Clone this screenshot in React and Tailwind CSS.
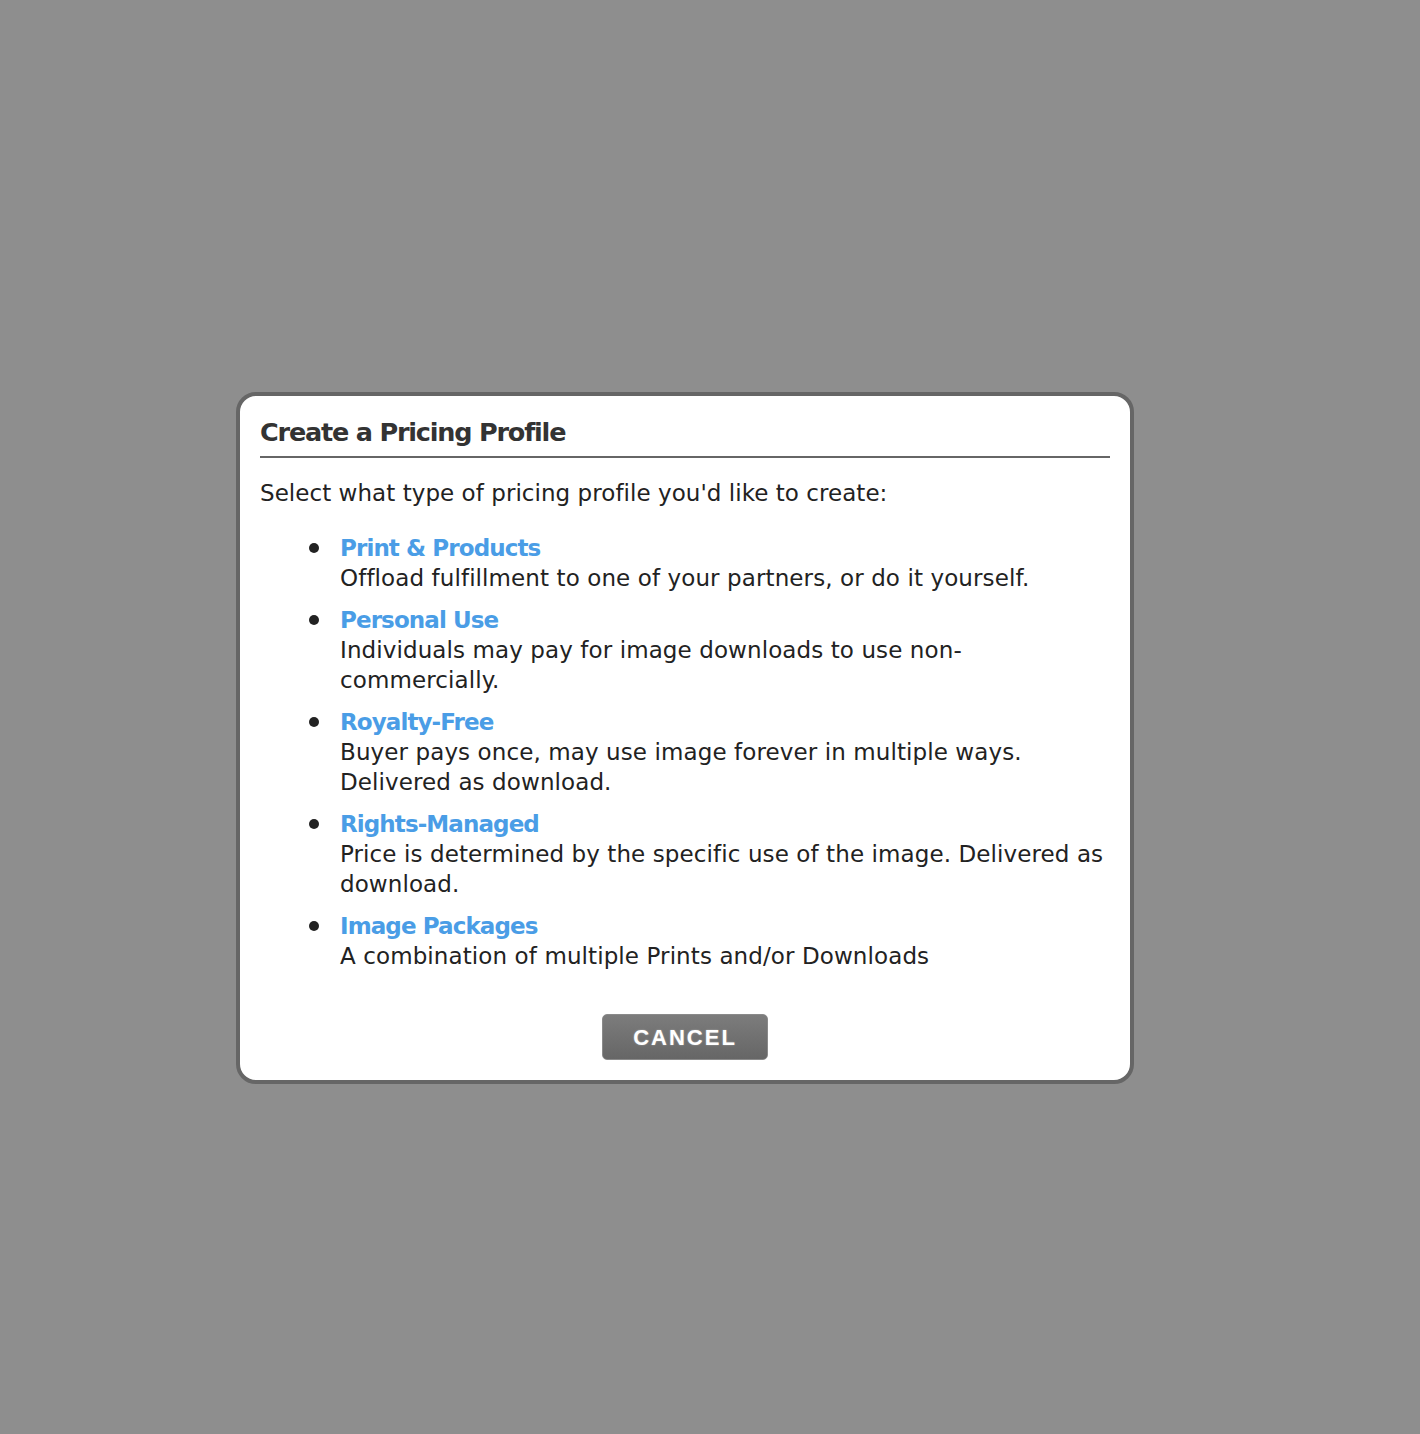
export default function App() {
  const items = [
    { t: "Print & Products", d: "Offload fulfillment to one of your partners, or do it yourself." },
    { t: "Personal Use", d: "Individuals may pay for image downloads to use non-commercially." },
    { t: "Royalty-Free", d: "Buyer pays once, may use image forever in multiple ways. Delivered as download." },
    { t: "Rights-Managed", d: "Price is determined by the specific use of the image. Delivered as download." },
    { t: "Image Packages", d: "A combination of multiple Prints and/or Downloads" },
  ];
  return (
    <div className="min-h-[1434px] w-full bg-[#8e8e8e] flex justify-start pl-[236px] pt-[392px]" style={{ fontFamily: '"DejaVu Sans", Verdana, sans-serif' }}>
      <div className="w-[898px] h-[692px] border-4 border-[#666666] rounded-[20px] bg-white px-[20px] pt-[16px]">
        <div className="text-[25.5px] font-bold text-[#333] leading-[40px] border-b-2 border-[#666] pb-[4px] tracking-[-1.2px]">Create a Pricing Profile</div>
        <div className="text-[23px] text-[#222] mt-[20px] leading-[30px] tracking-[0.05px]">Select what type of pricing profile you'd like to create:</div>
        <ul className="mt-[25px] pl-[80px] pr-0 text-[23px] leading-[30px] tracking-[0.1px]">
          {items.map((it) => (
            <li key={it.t} className="relative mb-[12px]">
              <span className="absolute left-[-31px] top-[10px] w-[10px] h-[10px] rounded-full bg-[#222]"></span>
              <div className="font-bold text-[#4a9de6] tracking-[-0.9px]">{it.t}</div>
              <div className="text-[#222]">{it.d}</div>
            </li>
          ))}
        </ul>
        <div className="flex justify-center mt-[43px]">
          <button className="w-[166px] h-[46px] rounded-[5px] border border-[#8a8a8a] bg-gradient-to-b from-[#7c7c7c] to-[#666666] text-white font-bold text-[22px] tracking-[2px] [text-shadow:0_0_2px_rgba(255,255,255,0.4)]" style={{ fontFamily: '"Liberation Sans", Arial, sans-serif' }}>CANCEL</button>
        </div>
      </div>
    </div>
  );
}
